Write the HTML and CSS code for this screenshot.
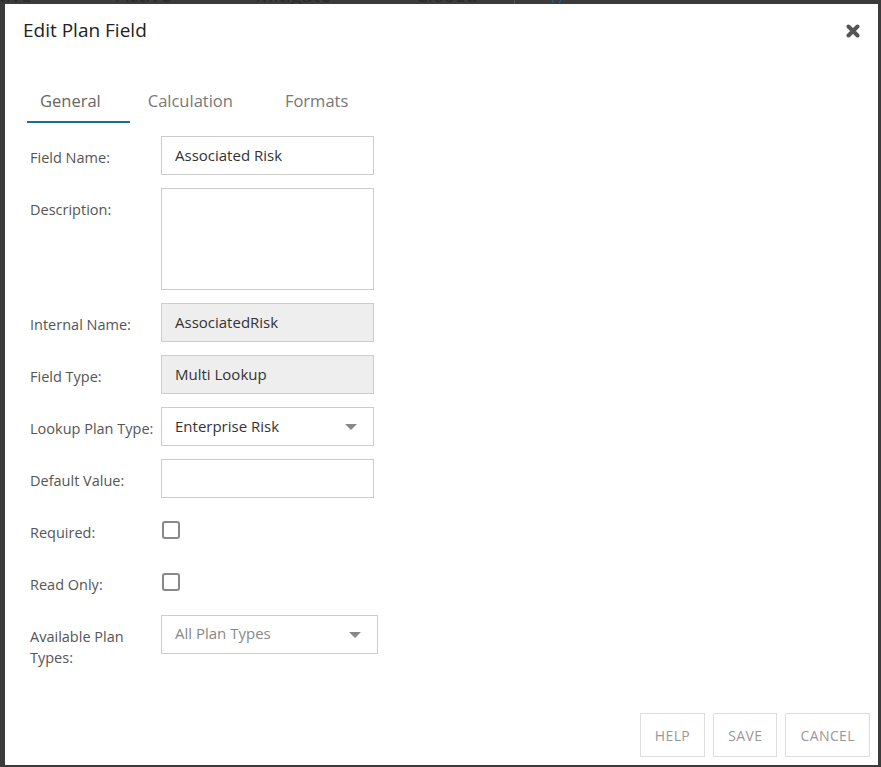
FILE: index.html
```html
<!DOCTYPE html>
<html lang="en">
<head>
    <meta charset="UTF-8">
    <meta name="viewport" content="width=device-width, initial-scale=1.0">
    <title>Edit Plan Field</title>
    <link rel="stylesheet" href="styles.css">
</head>
<body>
    <div class="backdrop">
        <span class="bg-text">Inactive</span>
        <span class="bg-check">&#10003;</span>
        <span class="bg-text">Active</span>
        <span class="bg-check">&#10003;</span>
        <span class="bg-text">Mitigate</span>
        <span class="bg-check">&#10003;</span>
        <span class="bg-text">Closed</span>
        <span class="bg-sep"></span>
        <span class="bg-check">( )</span>
    </div>

    <div class="dialog">
        <div class="dialog-header">
            <h1>Edit Plan Field</h1>
            <button class="close" title="Close">
                <svg width="14" height="14" viewBox="0 0 14 14">
                    <path d="M2.5 2.5 L11.5 11.5 M11.5 2.5 L2.5 11.5" stroke="#555" stroke-width="4" stroke-linecap="round" fill="none"/>
                </svg>
            </button>
        </div>

        <nav class="tabs">
            <a href="#general" class="tab active">General</a>
            <a href="#calculation" class="tab">Calculation</a>
            <a href="#formats" class="tab last">Formats</a>
        </nav>

        <form class="fields">
            <div class="row">
                <label>Field Name:</label>
                <div class="input">Associated Risk</div>
            </div>
            <div class="row">
                <label>Description:</label>
                <div class="input textarea"></div>
            </div>
            <div class="row">
                <label>Internal Name:</label>
                <div class="input readonly">AssociatedRisk</div>
            </div>
            <div class="row">
                <label>Field Type:</label>
                <div class="input readonly">Multi Lookup</div>
            </div>
            <div class="row">
                <label class="wide">Lookup Plan Type:</label>
                <div class="input select">Enterprise Risk<span class="caret"></span></div>
            </div>
            <div class="row">
                <label>Default Value:</label>
                <div class="input"></div>
            </div>
            <div class="row">
                <label>Required:</label>
                <span class="checkbox"></span>
            </div>
            <div class="row">
                <label>Read Only:</label>
                <span class="checkbox"></span>
            </div>
            <div class="row">
                <label>Available Plan Types:</label>
                <div class="input select multi">All Plan Types<span class="caret"></span></div>
            </div>
        </form>

        <div class="dialog-footer">
            <button class="btn">HELP</button>
            <button class="btn">SAVE</button>
            <button class="btn">CANCEL</button>
        </div>
    </div>
</body>
</html>
```

FILE: styles.css
```css
body {
    margin: 0;
    padding: 0;
    background-color: #3b3b3b;
    font-family: "Open Sans", "Noto Sans", sans-serif;
    height: 767px;
    overflow: hidden;
    position: relative;
}
.backdrop {
    display: flex;
    align-items: center;
    gap: 36px;
    margin-top: -15px;
    margin-left: -40px;
    font-size: 20px;
    line-height: 20px;
    color: #2a2a2a;
}
.bg-check {
    color: #1c5f8a;
    font-size: 14px;
}
.bg-sep {
    width: 1px;
    height: 20px;
    background-color: #555;
}
.dialog {
    position: absolute;
    left: 5px;
    top: 4px;
    right: 3px;
    bottom: 2px;
    background-color: white;
    display: flex;
    flex-direction: column;
}
.dialog-header {
    display: flex;
    align-items: center;
    justify-content: space-between;
    padding: 14px 18px 0 18px;
    height: 24px;
}
.dialog-header h1 {
    margin: 0;
    font-size: 19px;
    font-weight: normal;
    color: #222;
}
.close {
    border: none;
    background: none;
    padding: 0;
    display: flex;
    margin-top: 1px;
}
.tabs {
    display: flex;
    margin: 47px 0 0 22px;
}
.tab {
    text-decoration: none;
    color: #777;
    font-size: 16.5px;
    padding: 0 26px 9px 18px;
    border-bottom: 2px solid transparent;
}
.tab.last {
    padding-left: 26px;
}
.tab.active {
    border-bottom-color: #1a6da3;
    color: #666;
    padding: 0 29px 9px 13px;
}
.fields {
    display: flex;
    flex-direction: column;
    gap: 13px;
    margin: 13px 0 0 25px;
}
.row {
    display: grid;
    grid-template-columns: 131px auto;
    align-items: start;
    min-height: 39px;
}
.row label {
    font-size: 14.5px;
    line-height: 21px;
    color: #555;
    padding-top: 11px;
    width: 112px;
}
.row label.wide {
    width: 131px;
}
.input {
    width: 213px;
    height: 39px;
    box-sizing: border-box;
    border: 1px solid #ccc;
    padding: 0 13px;
    font-size: 15px;
    line-height: 37px;
    color: #333;
    position: relative;
}
.input.textarea {
    height: 102px;
}
.input.readonly {
    background-color: #eee;
}
.input.multi {
    width: 217px;
    color: #888;
    line-height: 35px;
}
.caret {
    position: absolute;
    right: 16px;
    top: 16px;
    width: 0;
    height: 0;
    border-left: 6px solid transparent;
    border-right: 6px solid transparent;
    border-top: 6px solid #888;
}
.checkbox {
    width: 18px;
    height: 18px;
    box-sizing: border-box;
    border: 2px solid #888;
    border-radius: 3px;
    margin: 10px 0 0 1px;
}
.dialog-footer {
    margin-top: auto;
    display: flex;
    justify-content: flex-end;
    gap: 8px;
    padding: 0 8px 8px 0;
}
.btn {
    height: 44px;
    padding: 0 14px;
    border: 1px solid #ddd;
    background-color: white;
    color: #999;
    font-family: inherit;
    font-size: 14px;
    letter-spacing: 0.4px;
}
```
